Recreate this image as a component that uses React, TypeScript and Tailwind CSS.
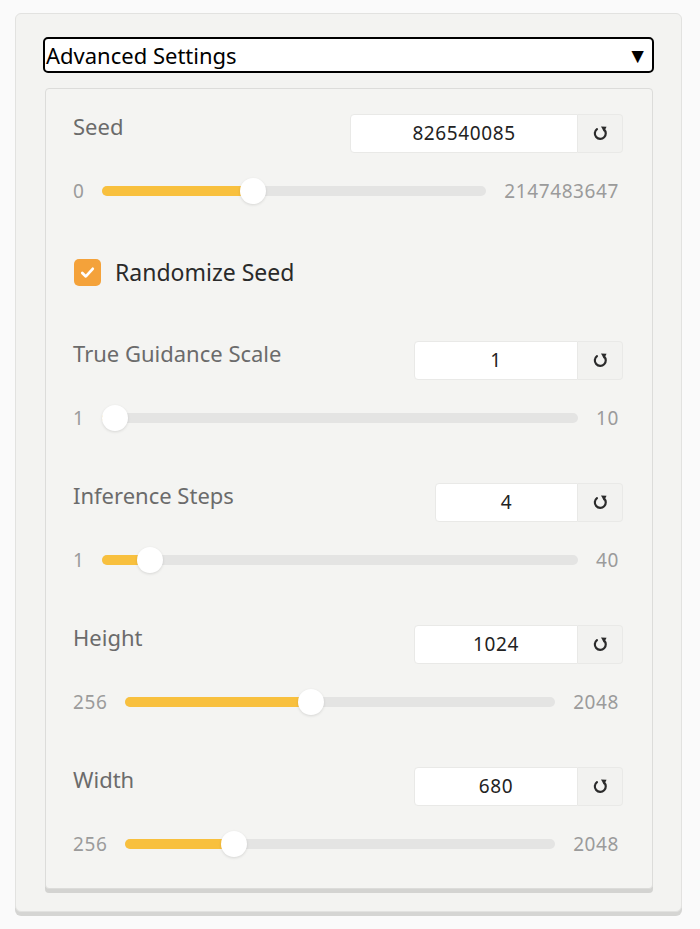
type SliderProps = {
  label: string;
  value: string;
  inputWidth: string;
  min: number;
  max: number;
  val: number;
  first?: boolean;
};

function ResetIcon() {
  return (
    <svg width="17" height="17" viewBox="0 0 14 14" fill="none">
      <path
        d="M9.8 3.6A4.5 4.5 0 1 1 4.1 3.4"
        stroke="#2b2b2b"
        strokeWidth="1.8"
        strokeLinecap="round"
      />
      <path d="M7.4 1.2 L12 1.4 L9.9 5.6 Z" fill="#2b2b2b" />
    </svg>
  );
}

function SliderSetting({ label, value, inputWidth, min, max, val, first }: SliderProps) {
  const p = (val - min) / (max - min);
  const pos = `calc(13px + ${p} * (100% - 26px))`;
  return (
    <div className={first ? "" : "mt-[52px]"}>
      <div className="flex items-start justify-between">
        <div className="text-[22px] leading-[25px] text-[#6b6b6b]">{label}</div>
        <div className="flex h-[39px]">
          <div
            className={`${inputWidth} flex items-center justify-center rounded-l-[4px] border border-[#e9e9e7] bg-white text-[19px] tracking-[0.6px] text-[#222]`}
          >
            {value}
          </div>
          <div className="flex w-[45px] items-center justify-center rounded-r-[4px] border border-l-0 border-[#e9e9e7] bg-[#f2f2f0]">
            <ResetIcon />
          </div>
        </div>
      </div>
      <div className="mt-[25px] flex h-[26px] items-center gap-[18px] pr-[4px]">
        <span className="text-[19px] tracking-[0.6px] text-[#9b9b9b]">{min}</span>
        <div className="relative h-[10px] flex-1 rounded-full bg-[#e4e4e3]">
          <div
            className="absolute left-0 top-0 h-[10px] rounded-full bg-[#f8c03e]"
            style={{ width: pos }}
          />
          <div
            className="absolute top-1/2 h-[26px] w-[26px] -translate-x-1/2 -translate-y-1/2 rounded-full bg-white shadow-[0_1px_3px_rgba(0,0,0,0.12)]"
            style={{ left: pos }}
          />
        </div>
        <span className="text-[19px] tracking-[0.6px] text-[#9b9b9b]">{max}</span>
      </div>
    </div>
  );
}

export default function App() {
  return (
    <div
      className="min-h-screen bg-[#fafafa] pt-[13px] pl-[15px] pr-[18px]"
      style={{ fontFamily: '"Noto Sans", "Open Sans", sans-serif' }}
    >
      <div className="rounded-[6px] border border-[#e2e2e0] bg-[#f3f3f1] px-[27px] pt-[23px] pb-[22px] shadow-[0_4px_0_#d5d5d3]">
        <div className="flex h-[36px] items-center justify-between rounded-[5px] border-2 border-black bg-white pl-[1px] pr-[4px]">
          <span className="text-[22px] leading-none text-black">Advanced Settings</span>
          <span className="text-[21px] leading-none text-black">▼</span>
        </div>
        <div className="mt-[15px] ml-[2px] mr-[1px] rounded-[4px] border border-[#dcdcda] bg-[#f4f4f2] pl-[27px] pr-[29px] pt-[25px] pb-[31px] shadow-[0_4px_0_#d3d3d1]">
          <SliderSetting
            first
            label="Seed"
            value="826540085"
            inputWidth="w-[228px]"
            min={0}
            max={2147483647}
            val={826540085}
          />
          <div className="mt-[55px] flex items-center gap-[14px]">
            <div className="ml-[1px] flex h-[27px] w-[27px] items-center justify-center rounded-[5px] bg-[#f4a23a]">
              <svg width="19" height="19" viewBox="0 0 16 16" fill="none">
                <path
                  d="M3.6 8.4 L6.6 11.3 L12.4 4.9"
                  stroke="white"
                  strokeWidth="2.3"
                  strokeLinecap="round"
                  strokeLinejoin="round"
                />
              </svg>
            </div>
            <span className="text-[23px] leading-none text-[#2a2a2a]">Randomize Seed</span>
          </div>
          <div className="mt-[55px]">
            <SliderSetting
              first
              label="True Guidance Scale"
              value="1"
              inputWidth="w-[164px]"
              min={1}
              max={10}
              val={1}
            />
          </div>
          <SliderSetting
            label="Inference Steps"
            value="4"
            inputWidth="w-[143px]"
            min={1}
            max={40}
            val={4}
          />
          <SliderSetting
            label="Height"
            value="1024"
            inputWidth="w-[164px]"
            min={256}
            max={2048}
            val={1024}
          />
          <SliderSetting
            label="Width"
            value="680"
            inputWidth="w-[164px]"
            min={256}
            max={2048}
            val={680}
          />
        </div>
      </div>
    </div>
  );
}
